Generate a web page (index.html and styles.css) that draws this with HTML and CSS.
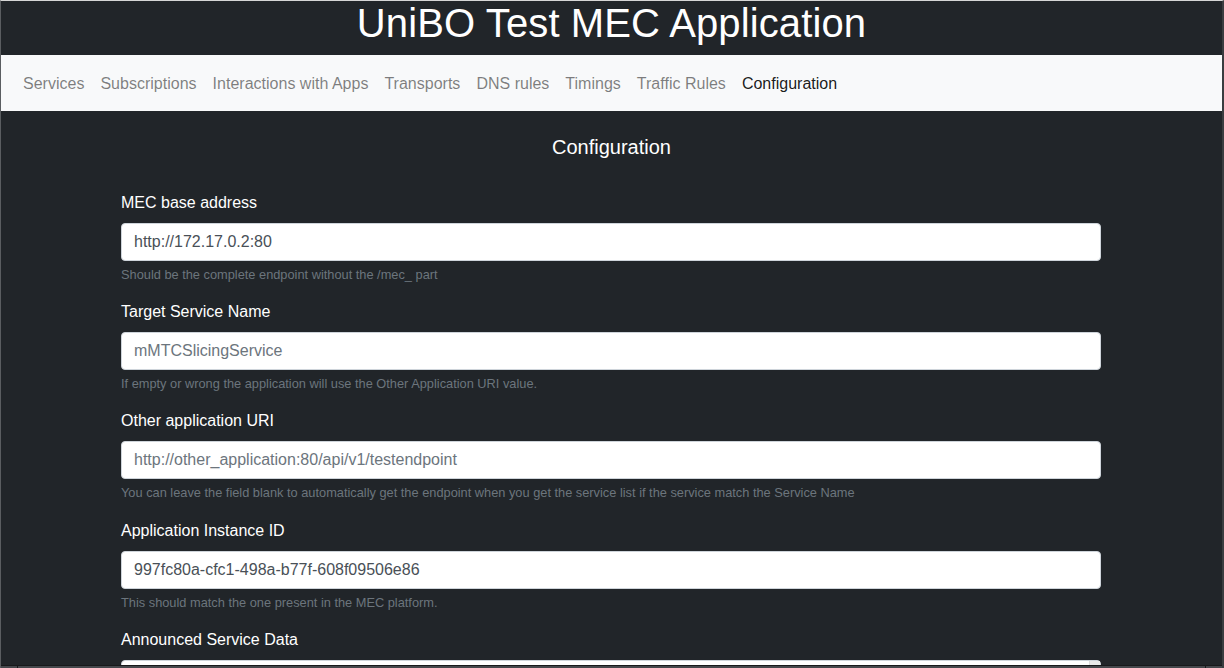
FILE: index.html
```html
<!DOCTYPE html>
<html lang="en">
<head>
<meta charset="utf-8">
<title>UniBO Test MEC Application</title>
<link rel="stylesheet" href="styles.css">
</head>
<body>
<div class="frame">
  <header class="topbar">
    <h1 class="title">UniBO Test MEC Application</h1>
  </header>
  <nav class="navbar">
    <a class="nav-link" href="#">Services</a>
    <a class="nav-link" href="#">Subscriptions</a>
    <a class="nav-link" href="#">Interactions with Apps</a>
    <a class="nav-link" href="#">Transports</a>
    <a class="nav-link" href="#">DNS rules</a>
    <a class="nav-link" href="#">Timings</a>
    <a class="nav-link" href="#">Traffic Rules</a>
    <a class="nav-link active" href="#">Configuration</a>
  </nav>
  <main class="content">
    <h5 class="section-title">Configuration</h5>
    <form class="config-form">
      <div class="form-group">
        <label class="form-label" for="mec">MEC base address</label>
        <input class="form-control" id="mec" type="text" value="http://172.17.0.2:80">
        <small class="form-text">Should be the complete endpoint without the /mec_ part</small>
      </div>
      <div class="form-group">
        <label class="form-label" for="tsn">Target Service Name</label>
        <input class="form-control" id="tsn" type="text" placeholder="mMTCSlicingService">
        <small class="form-text">If empty or wrong the application will use the Other Application URI value.</small>
      </div>
      <div class="form-group">
        <label class="form-label" for="uri">Other application URI</label>
        <input class="form-control" id="uri" type="text" placeholder="http://other_application:80/api/v1/testendpoint">
        <small class="form-text">You can leave the field blank to automatically get the endpoint when you get the service list if the service match the Service Name</small>
      </div>
      <div class="form-group">
        <label class="form-label" for="aid">Application Instance ID</label>
        <input class="form-control" id="aid" type="text" value="997fc80a-cfc1-498a-b77f-608f09506e86">
        <small class="form-text">This should match the one present in the MEC platform.</small>
      </div>
      <div class="form-group">
        <label class="form-label" for="asd">Announced Service Data</label>
        <div class="textarea-box">
          <textarea class="form-control textarea" id="asd" rows="6"></textarea>
          <div class="scroll-track"></div>
        </div>
      </div>
    </form>
  </main>
  <div class="bottom-edge"><span class="edge-l"></span><span class="edge-r"></span></div>
</div>
</body>
</html>
```
FILE: styles.css
```css
* { box-sizing: border-box; }
html, body {
  margin: 0;
  padding: 0;
  height: 100%;
  overflow: hidden;
  background: #212529;
}
body {
  font-family: "Liberation Sans", Arial, sans-serif;
  font-size: 16px;
  line-height: 1.5;
}
.frame {
  position: relative;
  width: 1224px;
  height: 668px;
  overflow: hidden;
  border-top: 1px solid #d6d6d6;
  border-left: 1px solid #5a5d60;
  border-right: 2px solid #3a3d40;
  background: #212529;
}
.topbar {
  height: 54px;
  background: #212529;
  display: flex;
  justify-content: center;
}
.title {
  margin: 0;
  font-size: 40px;
  font-weight: 400;
  line-height: 44px;
  letter-spacing: 0.12px;
  color: #fff;
}
.navbar {
  height: 56px;
  background: #f8f9fa;
  display: flex;
  align-items: center;
  padding: 0 14px;
}
.nav-link {
  display: block;
  padding: 9px 8px 7px;
  line-height: 24px;
  letter-spacing: 0.008px;
  color: rgba(0, 0, 0, 0.5);
  text-decoration: none;
}
.nav-link.active { color: rgba(0, 0, 0, 0.9); }
.content {
  padding-top: 24px;
}
.section-title {
  margin: 0 0 32px;
  font-size: 20px;
  font-weight: 400;
  line-height: 24px;
  text-align: center;
  color: #fff;
}
.config-form {
  width: 980px;
  margin: 0 0 0 120px;
}
.form-group {
  margin-bottom: 16px;
}
.form-label {
  display: block;
  margin-bottom: 8px;
  color: #fff;
  line-height: 24px;
}
.form-control {
  display: block;
  width: 100%;
  height: 38px;
  padding: 6px 12px;
  font-family: inherit;
  font-size: 16px;
  line-height: 24px;
  color: #495057;
  background: #fff;
  border: 1px solid #ced4da;
  border-radius: 4px;
  outline: none;
}
.form-control::placeholder { color: #6c757d; opacity: 1; }
.form-text {
  display: block;
  margin-top: 4px;
  font-size: 12.8px;
  line-height: 19.2px;
  color: #6c757d;
}
.textarea-box {
  position: relative;
}
.textarea {
  height: 160px;
  resize: none;
  overflow: hidden;
}
.scroll-track {
  position: absolute;
  top: 1px;
  right: 1px;
  width: 11px;
  height: 150px;
  background: #e9e9e9;
  border-left: 1px solid #dcdcdc;
}
.bottom-edge {
  position: absolute;
  left: 0;
  right: 0;
  bottom: 0;
  height: 3px;
  background: #45484c;
  border-top: 1px solid #18191b;
}
.edge-l, .edge-r {
  position: absolute;
  top: 0;
  width: 1px;
  height: 2px;
  background: #18191b;
}
.edge-l { left: 16px; }
.edge-r { right: 16px; }
```
